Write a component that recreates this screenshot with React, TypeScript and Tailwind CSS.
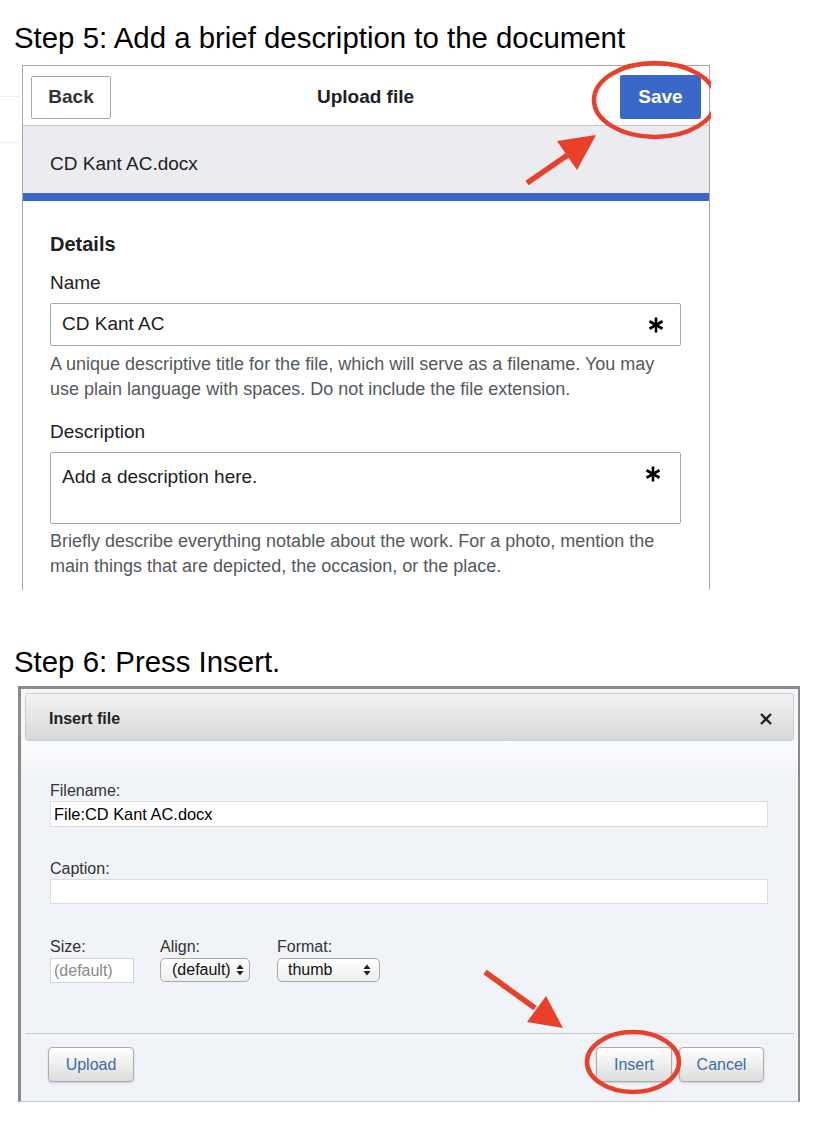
import React from 'react';

function Asterisk() {
  return (
    <svg width="16" height="16" viewBox="0 0 16 16" className="shrink-0">
      <g stroke="#000" strokeWidth="2.6" strokeLinecap="butt">
        <line x1="8" y1="0.5" x2="8" y2="15.5" />
        <line x1="1.5" y1="4.25" x2="14.5" y2="11.75" />
        <line x1="1.5" y1="11.75" x2="14.5" y2="4.25" />
      </g>
    </svg>
  );
}

function SelectArrows() {
  return (
    <svg width="8" height="12" viewBox="0 0 8 12" className="shrink-0">
      <path d="M4 0.5 L7.5 5 L0.5 5 Z" fill="#222" />
      <path d="M4 11.5 L7.5 7 L0.5 7 Z" fill="#222" />
    </svg>
  );
}

function Overlay() {
  // red annotations drawn over the screenshots
  const red = '#e9402a';
  return (
    <svg className="absolute inset-0 pointer-events-none" width="828" height="1128" viewBox="0 0 828 1128">
      <defs>
        <clipPath id="clipTop">
          <rect x="0" y="0" width="711" height="600" />
        </clipPath>
      </defs>
      <ellipse cx="655" cy="100" rx="61" ry="37" fill="none" stroke={red} strokeWidth="4.5" clipPath="url(#clipTop)" />
      <line x1="527" y1="183" x2="572" y2="152" stroke={red} strokeWidth="5.5" />
      <polygon points="596,135 557,141 577,170" fill={red} />

      <ellipse cx="633" cy="1062" rx="46" ry="30" fill="none" stroke={red} strokeWidth="4.5" />
      <line x1="485" y1="972" x2="535" y2="1008" stroke={red} strokeWidth="5.5" />
      <polygon points="563,1028 527,1022 546,996" fill={red} />
    </svg>
  );
}

function UploadPanel() {
  return (
    <div className="flex">
      {/* faint page edge behind the dialog */}
      <div className="w-[22px] h-[525px] flex flex-col">
        <div className="mt-[31px] h-[1px] w-[20px] bg-[#eeeeee]" />
        <div className="mt-[45px] h-[1px] w-[20px] bg-[#eeeeee]" />
      </div>
      <div className="w-[688px] h-[525px] border border-b-0 border-[#a2a9b1] flex flex-col text-[#202122]">
        <div className="h-[60px] border-b border-[#c8ccd1] flex items-center justify-between pl-[8px] pr-[8px] pt-[3px]">
          <div className="w-[80px] h-[43px] border border-[#a2a9b1] rounded-[2px] flex items-center justify-center text-[19px] font-bold text-[#333]">
            Back
          </div>
          <div className="text-[19px] font-bold">Upload file</div>
          <div className="w-[81px] h-[44px] bg-[#3a68c8] rounded-[2px] flex items-center justify-center text-[19px] font-bold text-white">
            Save
          </div>
        </div>
        <div className="h-[67px] bg-[#eaecf0] flex items-center pl-[27px] pt-[9px] text-[19px]">CD Kant AC.docx</div>
        <div className="h-[8px] bg-[#3a66c9]" />
        <div className="pl-[27px] pr-[28px] flex flex-col">
          <div className="mt-[31px] text-[20px] leading-[24px] font-bold">Details</div>
          <div className="mt-[15px] text-[19px] leading-[24px]">Name</div>
          <div className="mt-[8px] h-[43px] border border-[#a2a9b1] rounded-[2px] flex items-center justify-between pl-[11px] pr-[16px] text-[19px]">
            <span>CD Kant AC</span>
            <Asterisk />
          </div>
          <div className="mt-[6px] text-[18px] leading-[25px] text-[#54595d]">
            A unique descriptive title for the file, which will serve as a filename. You may
            <br />
            use plain language with spaces. Do not include the file extension.
          </div>
          <div className="mt-[18px] text-[19px] leading-[24px]">Description</div>
          <div className="mt-[8px] h-[72px] border border-[#a2a9b1] rounded-[2px] flex items-start justify-between pl-[11px] pr-[19px] pt-[12px] text-[19px] leading-[24px]">
            <span>Add a description here.</span>
            <span className="mt-[1px]"><Asterisk /></span>
          </div>
          <div className="mt-[5px] text-[18px] leading-[25px] text-[#54595d]">
            Briefly describe everything notable about the work. For a photo, mention the
            <br />
            main things that are depicted, the occasion, or the place.
          </div>
        </div>
      </div>
    </div>
  );
}

function GrayButton({ label, w }: { label: string; w: string }) {
  return (
    <div
      className={`${w} h-[35px] rounded-[4px] border border-[#ababab] bg-linear-to-b from-[#ffffff] to-[#dddddd] shadow-[0_1px_2px_rgba(0,0,0,0.15)] flex items-center justify-center text-[16px] text-[#3a6ea5]`}
    >
      {label}
    </div>
  );
}

function InsertDialog() {
  return (
    <div className="ml-[18px] w-[782px] h-[416px] border-[3px] border-[#8a8a8a] border-r-2 border-b border-b-[#c4c4c4] bg-[#f0f3f7] flex flex-col text-[#333]">
      <div className="bg-[#f6f6f6] pt-[4px] px-[4px]">
        <div className="h-[48px] rounded-[3px] border border-[#bcd2ea] bg-linear-to-b from-[#f3f3f3] to-[#d8d8d8] flex items-center justify-between pl-[23px] pr-[21px] pt-[3px]">
          <span className="text-[16px] font-bold text-[#222]">Insert file</span>
          <svg width="12" height="12" viewBox="0 0 12 12">
            <g stroke="#222" strokeWidth="2.4">
              <line x1="1" y1="1" x2="11" y2="11" />
              <line x1="11" y1="1" x2="1" y2="11" />
            </g>
          </svg>
        </div>
      </div>
      <div className="flex-1 flex flex-col bg-linear-to-b from-[#fbfcfd] to-[#f0f3f7] to-[40px]">
        <div className="pl-[29px] pr-[30px] flex flex-col">
          <div className="mt-[40px] text-[16px] leading-[20px]">Filename:</div>
          <div className="h-[26px] bg-white border border-[#dcdcdc] flex items-center pl-[3px] text-[16.4px] text-black">
            File:CD Kant AC.docx
          </div>
          <div className="mt-[32px] text-[16px] leading-[20px]">Caption:</div>
          <div className="h-[25px] bg-white border border-[#dcdcdc]" />
          <div className="mt-[33px] flex text-[16px] leading-[20px]">
            <div className="w-[110px] flex flex-col">
              <span>Size:</span>
              <div className="mt-[1px] w-[84px] h-[25px] bg-white border border-[#d4d4d4] flex items-center pl-[3px] text-[#8a8a8a]">
                (default)
              </div>
            </div>
            <div className="w-[117px] flex flex-col">
              <span>Align:</span>
              <div className="mt-[1px] w-[90px] h-[24px] rounded-[5px] border border-[#a8a8a8] bg-linear-to-b from-[#ffffff] to-[#eeeeee] flex items-center justify-between pl-[11px] pr-[5px] text-[#111]">
                <span>(default)</span>
                <SelectArrows />
              </div>
            </div>
            <div className="flex flex-col">
              <span>Format:</span>
              <div className="mt-[1px] w-[103px] h-[24px] rounded-[5px] border border-[#a8a8a8] bg-linear-to-b from-[#ffffff] to-[#eeeeee] flex items-center justify-between pl-[10px] pr-[8px] text-[#111]">
                <span>thumb</span>
                <SelectArrows />
              </div>
            </div>
          </div>
        </div>
        <div className="mt-[50px] mx-[4px] h-[1px] bg-[#c8c8c8]" />
        <div className="mt-[13px] flex items-center justify-between pl-[27px] pr-[34px]">
          <GrayButton label="Upload" w="w-[86px]" />
          <div className="flex gap-[7px]">
            <GrayButton label="Insert" w="w-[76px]" />
            <GrayButton label="Cancel" w="w-[85px]" />
          </div>
        </div>
      </div>
    </div>
  );
}

export default function App() {
  return (
    <div className="relative w-[828px] h-[1128px] bg-white overflow-hidden font-['Liberation_Sans',Arial,sans-serif]">
      <div className="flex flex-col">
        <div className="mt-[20px] h-[36px] leading-[36px] pl-[14px] text-[29.4px] text-black">
          Step 5: Add a brief description to the document
        </div>
        <div className="mt-[9px]">
          <UploadPanel />
        </div>
        <div className="mt-[54px] h-[36px] leading-[36px] pl-[14px] text-[29.4px] text-black">Step 6: Press Insert.</div>
        <div className="mt-[6px]">
          <InsertDialog />
        </div>
      </div>
      <Overlay />
    </div>
  );
}
